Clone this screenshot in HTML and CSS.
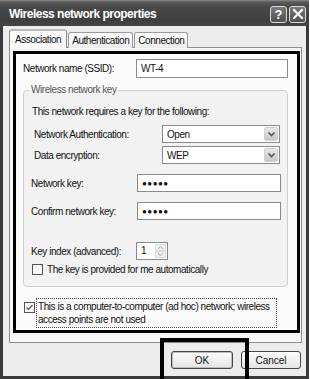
FILE: index.html
```html
<!DOCTYPE html>
<html>
<head>
<meta charset="utf-8">
<link rel="stylesheet" href="styles.css">
</head>
<body>
<div class="window">
  <div class="titlebar">
    <span class="title">Wireless network properties</span>
    <div class="tbtns">
      <span class="tbtn help">?</span>
      <span class="tbtn close"><svg width="12" height="12" viewBox="0 0 12 12"><path d="M2 2 L10 10 M10 2 L2 10" stroke="#fff" stroke-width="2" stroke-linecap="square"/></svg></span>
    </div>
  </div>
  <div class="client">
    <div class="tabs">
      <span class="tab active">Association</span>
      <span class="tab">Authentication</span>
      <span class="tab">Connection</span>
    </div>
    <div class="panel">
      <div class="frame">
        <div class="row ssid">
          <span class="lbl">Network name (SSID):</span>
          <span class="input wide">WT-4</span>
        </div>
        <div class="group">
          <span class="legend">Wireless network key</span>
          <div class="note">This network requires a key for the following:</div>
          <div class="row sel first">
            <span class="lbl">Network Authentication:</span>
            <span class="select"><span class="val">Open</span><span class="arrow"><svg width="9" height="7" viewBox="0 0 9 7"><path d="M1.5 1.5 L4.5 4.5 L7.5 1.5" stroke="#555" stroke-width="1.6" fill="none"/></svg></span></span>
          </div>
          <div class="row sel second">
            <span class="lbl">Data encryption:</span>
            <span class="select"><span class="val">WEP</span><span class="arrow"><svg width="9" height="7" viewBox="0 0 9 7"><path d="M1.5 1.5 L4.5 4.5 L7.5 1.5" stroke="#555" stroke-width="1.6" fill="none"/></svg></span></span>
          </div>
          <div class="row key">
            <span class="lbl">Network key:</span>
            <span class="input pw">●●●●●</span>
          </div>
          <div class="row key">
            <span class="lbl">Confirm network key:</span>
            <span class="input pw">●●●●●</span>
          </div>
          <div class="row idx">
            <span class="lbl">Key index (advanced):</span>
            <span class="spin"><span class="val">1</span><span class="spbtns"><span class="spb"><svg width="7" height="5" viewBox="0 0 7 5"><path d="M1 4 L3.5 1.5 L6 4" stroke="#aaa" fill="none"/></svg></span><span class="spb"><svg width="7" height="5" viewBox="0 0 7 5"><path d="M1 1 L3.5 3.5 L6 1" stroke="#aaa" fill="none"/></svg></span></span></span>
          </div>
          <div class="check auto">
            <span class="box"></span>
            <span>The key is provided for me automatically</span>
          </div>
        </div>
        <div class="check adhoc">
          <span class="box checked"><svg width="9" height="9" viewBox="0 0 9 9"><path d="M1.5 4.5 L3.5 6.5 L7.5 2" stroke="#666" stroke-width="1.4" fill="none"/></svg></span>
          <span class="focus">This is a computer-to-computer (ad hoc) network; wireless access points are not used</span>
        </div>
      </div>
    </div>
    <div class="buttons">
      <span class="btn ok">OK</span>
      <span class="btn cancel">Cancel</span>
      <span class="mark"></span>
    </div>
  </div>
</div>
</body>
</html>
```
FILE: styles.css
```css
* { box-sizing: border-box; }
html, body { margin: 0; padding: 0; }
body {
  width: 310px;
  height: 379px;
  overflow: hidden;
  background: #fff;
  font-family: "Liberation Sans", Arial, sans-serif;
  font-size: 10px;
  letter-spacing: -0.45px;
  color: #111;
}
.window {
  width: 309px;
  height: 379px;
  border-left: 3px solid #3a3a3a;
  border-right: 3px solid #3a3a3a;
  border-bottom: 3px solid #3a3a3a;
  background: #ececec;
  display: flex;
  flex-direction: column;
}
.titlebar {
  height: 26px;
  margin: 0 -3px;
  background: linear-gradient(#8a8a8a 0, #5a5a5a 2px, #4a4a4a 6px, #3e3e3e 20px, #444 26px);
  display: flex;
  align-items: center;
  justify-content: space-between;
  padding: 0 3px 0 9px;
}
.title {
  color: #fff;
  font-weight: bold;
  font-size: 12px;
  letter-spacing: -0.5px;
  padding-top: 2px;
}
.tbtns { display: flex; gap: 2px; padding-top: 2px; }
.tbtn {
  width: 17px;
  height: 17px;
  border: 1px solid #ddd;
  border-radius: 3px;
  background: linear-gradient(#7a7a7a, #505050);
  color: #fff;
  font-weight: bold;
  font-size: 13px;
  letter-spacing: 0;
  display: flex;
  align-items: center;
  justify-content: center;
}
.client {
  flex: 1;
  padding: 4px 4px 0 6px;
  display: flex;
  flex-direction: column;
}
.tabs {
  display: flex;
  align-items: flex-end;
  height: 18px;
  padding-left: 2px;
  position: relative;
  z-index: 1;
}
.tab {
  height: 16px;
  border: 1px solid #9a9a9a;
  border-bottom: none;
  border-radius: 3px 3px 0 0;
  background: linear-gradient(#fff, #ececec);
  padding: 1px 3px 0;
  margin-right: 1px;
  line-height: 14px;
}
.tab.active {
  height: 19px;
  background: #fafafa;
  border-color: #888;
  margin-left: -2px;
  padding: 2px 5px 0;
  border-top: 2px solid #bbb;
  margin-right: 1px;
}
.panel {
  height: 296px;
  border: 1px solid #8e8e8e;
  background: #f7f7f7;
  margin-top: -1px;
  padding: 3px 1px 0 3px;
}
.frame {
  height: 282px;
  border: 3px solid #000;
  background: #fbfbfb;
  padding: 5px 9px 0 7px;
}
.row { display: flex; align-items: center; }
.ssid { height: 19px; justify-content: space-between; }
.lbl { white-space: nowrap; }
.input {
  height: 19px;
  border: 1px solid #8a8a8a;
  background: #fff;
  padding: 2px 4px;
  line-height: 14px;
}
.input.wide { width: 152px; }
.group {
  margin-top: 12px;
  border: 1px solid #cfcfcf;
  border-radius: 4px;
  background: #f2f2f2;
  position: relative;
  padding: 13px 6px 11px 8px;
}
.legend {
  position: absolute;
  top: -7px;
  left: 5px;
  padding: 0 2px;
  background: linear-gradient(#fbfbfb 50%, #f2f2f2 50%);
  color: #555;
}
.note { height: 16px; line-height: 16px; }
.sel { height: 18px; justify-content: space-between; padding-left: 2px; padding-right: 1px; }
.sel.first { margin-top: 5px; }
.sel.second { margin-top: 3px; }
.select {
  width: 118px;
  height: 18px;
  border: 1px solid #8a8a8a;
  background: #fff;
  display: flex;
  align-items: center;
  justify-content: space-between;
  padding: 0 1px 0 4px;
}
.arrow {
  width: 14px;
  height: 14px;
  background: linear-gradient(#e8e8e8, #c8c8c8);
  border: 1px solid #d0d0d0;
  border-radius: 2px;
  display: flex;
  align-items: center;
  justify-content: center;
}
.key { height: 18px; justify-content: space-between; margin-left: -1px; margin-top: 10px; }
.key .input { width: 144px; height: 18px; font-size: 8px; letter-spacing: 0.5px; line-height: 14px; }
.idx { margin-top: 22px; height: 18px; margin-left: -1px; }
.idx .lbl { width: 105px; }
.spin {
  width: 32px;
  height: 18px;
  border: 1px solid #8a8a8a;
  background: #fff;
  display: flex;
  justify-content: space-between;
  padding-left: 4px;
  line-height: 16px;
}
.spbtns { display: flex; flex-direction: column; width: 11px; margin: 1px; }
.spb {
  flex: 1;
  background: #f0f0f0;
  border: 1px solid #ddd;
  display: flex;
  align-items: center;
  justify-content: center;
}
.check { display: flex; align-items: flex-start; gap: 4px; }
.box {
  width: 11px;
  height: 11px;
  border: 1px solid #555;
  background: #fafafa;
  flex: none;
  display: flex;
  align-items: center;
  justify-content: center;
}
.auto { margin-top: 4px; align-items: center; height: 11px; }
.adhoc { margin-top: 11px; margin-left: 1px; gap: 1px; }
.adhoc .box { margin-top: 4px; }
.focus {
  border: 1px dotted #444;
  padding: 1px 2px 1px 1px;
  line-height: 13px;
  width: 241px;
}
.buttons {
  flex: 1;
  display: flex;
  justify-content: flex-end;
  align-items: flex-start;
  padding-top: 8px;
  padding-right: 1px;
  gap: 8px;
  position: relative;
}
.btn {
  height: 18px;
  border: 1px solid #444;
  border-radius: 3px;
  background: linear-gradient(#fdfdfd, #e4e4e4);
  display: flex;
  align-items: center;
  justify-content: center;
  letter-spacing: 0;
}
.ok { width: 62px; box-shadow: inset 0 0 0 1px #bbb; }
.cancel { width: 60px; }
.mark {
  position: absolute;
  left: 151px;
  top: -5px;
  width: 89px;
  height: 50px;
  border: 4px solid #000;
}
```
